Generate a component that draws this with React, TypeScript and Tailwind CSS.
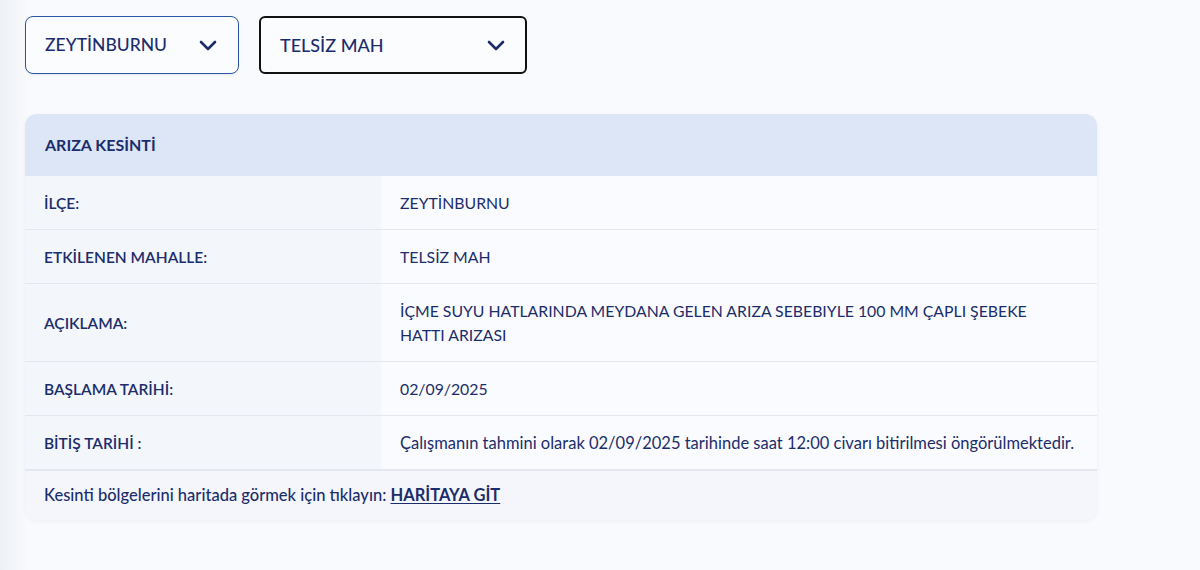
import React from "react";

const Chevron = () => (
  <svg width="18" height="11" viewBox="0 0 18 11" fill="none">
    <path d="M2 2l7 7 7-7" stroke="#1b2d6b" strokeWidth="2.6" strokeLinecap="round" strokeLinejoin="round" />
  </svg>
);

const rows: { label: string; value: React.ReactNode; lower?: boolean }[] = [
  { label: "İLÇE:", value: "ZEYTİNBURNU" },
  { label: "ETKİLENEN MAHALLE:", value: "TELSİZ MAH" },
  { label: "AÇIKLAMA:", value: "İÇME SUYU HATLARINDA MEYDANA GELEN ARIZA SEBEBIYLE 100 MM ÇAPLI ŞEBEKE HATTI ARIZASI" },
  { label: "BAŞLAMA TARİHİ:", value: "02/09/2025" },
  { label: "BİTİŞ TARİHİ :", value: "Çalışmanın tahmini olarak 02/09/2025 tarihinde saat 12:00 civarı bitirilmesi öngörülmektedir.", lower: true },
];

export default function App() {
  return (
    <div
      className="min-h-[570px] w-[1200px] bg-[linear-gradient(to_right,#edf0f5,#f9fafd_28px)] pl-[25px] pt-[16px] text-[#1b2d6b]"
      style={{ fontFamily: "Lato, 'Noto Sans', sans-serif" }}
    >
      <div className="flex gap-[20px]">
        <div className="flex h-[58px] w-[214px] items-center justify-between rounded-[8px] border-[1.5px] border-[#2b56a3] bg-[#fbfcfe] pl-[19px] pr-[21px] shadow-[0_1px_2px_rgba(0,0,0,0.08)]">
          <span className="text-[17.5px] font-medium">ZEYTİNBURNU</span>
          <Chevron />
        </div>
        <div className="flex h-[58px] w-[268px] items-center justify-between rounded-[6px] border-2 border-[#111] bg-[#fbfcfe] pl-[19px] pr-[20px]">
          <span className="text-[18px] font-medium">TELSİZ MAH</span>
          <Chevron />
        </div>
      </div>

      <div className="mt-[40px] w-[1072px] overflow-hidden rounded-[12px] bg-[#f4f6fb] shadow-[0_1px_4px_rgba(30,50,100,0.06)]">
        <div className="flex h-[62px] items-center bg-[#dde6f7] px-[20px] text-[16px] font-bold">
          ARIZA KESİNTİ
        </div>
        {rows.map((r, i) => (
          <div key={i} className={`flex ${i === 0 ? "" : "border-t border-[#e4e7ed]"}`}>
            <div className="flex w-[356px] shrink-0 items-center bg-[#f3f6fb] pl-[19px] pr-4 text-[15.5px] font-semibold leading-6">
              {r.label}
            </div>
            <div
              className={`flex-1 bg-[#fafbfe] pl-[19px] pr-[40px] pt-[15px] pb-[14px] leading-6 ${
                r.lower ? "whitespace-nowrap text-[16.5px]" : "text-[15.8px]"
              }`}
            >
              {r.value}
            </div>
          </div>
        ))}
        <div className="flex h-[51px] items-center border-t-2 border-[#e4e7ed] bg-[#f4f6fb] px-[19px] text-[16.5px] font-medium">
          Kesinti bölgelerini haritada görmek için tıklayın:&nbsp;
          <a className="font-bold underline underline-offset-2">HARİTAYA GİT</a>
        </div>
      </div>
    </div>
  );
}
